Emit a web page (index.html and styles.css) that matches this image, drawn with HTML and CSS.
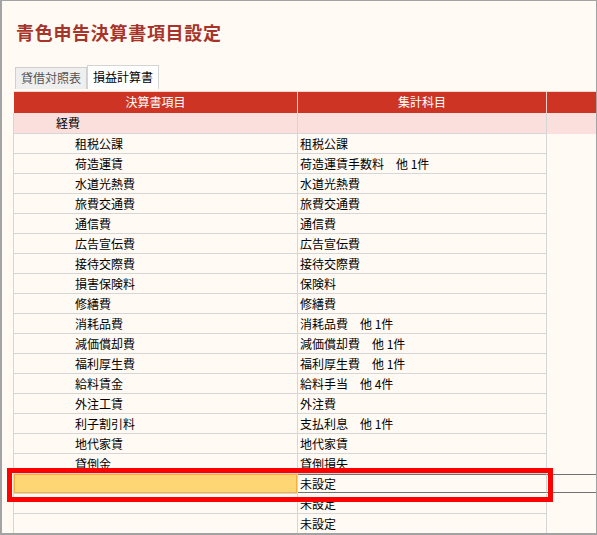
FILE: index.html
```html
<!DOCTYPE html>
<html lang="ja">
<head>
<meta charset="utf-8">
<title>青色申告決算書項目設定</title>
<link rel="stylesheet" href="styles.css">
</head>
<body>
<div class="frame">
  <h1 class="title">青色申告決算書項目設定</h1>
  <div class="tabs">
    <div class="tab">貸借対照表</div>
    <div class="tab active">損益計算書</div>
  </div>
  <div class="grid">
    <div class="row head"><div class="c1">決算書項目</div><div class="c2">集計科目</div><div class="c3"></div></div>
    <div class="row group"><div class="c1">経費</div><div class="c2"></div><div class="c3"></div></div>
    <div class="row"><div class="c1">租税公課</div><div class="c2">租税公課</div><div class="c3"></div></div>
    <div class="row"><div class="c1">荷造運賃</div><div class="c2">荷造運賃手数料　他 1件</div><div class="c3"></div></div>
    <div class="row"><div class="c1">水道光熱費</div><div class="c2">水道光熱費</div><div class="c3"></div></div>
    <div class="row"><div class="c1">旅費交通費</div><div class="c2">旅費交通費</div><div class="c3"></div></div>
    <div class="row"><div class="c1">通信費</div><div class="c2">通信費</div><div class="c3"></div></div>
    <div class="row"><div class="c1">広告宣伝費</div><div class="c2">広告宣伝費</div><div class="c3"></div></div>
    <div class="row"><div class="c1">接待交際費</div><div class="c2">接待交際費</div><div class="c3"></div></div>
    <div class="row"><div class="c1">損害保険料</div><div class="c2">保険料</div><div class="c3"></div></div>
    <div class="row"><div class="c1">修繕費</div><div class="c2">修繕費</div><div class="c3"></div></div>
    <div class="row"><div class="c1">消耗品費</div><div class="c2">消耗品費　他 1件</div><div class="c3"></div></div>
    <div class="row"><div class="c1">減価償却費</div><div class="c2">減価償却費　他 1件</div><div class="c3"></div></div>
    <div class="row"><div class="c1">福利厚生費</div><div class="c2">福利厚生費　他 1件</div><div class="c3"></div></div>
    <div class="row"><div class="c1">給料賃金</div><div class="c2">給料手当　他 4件</div><div class="c3"></div></div>
    <div class="row"><div class="c1">外注工賃</div><div class="c2">外注費</div><div class="c3"></div></div>
    <div class="row"><div class="c1">利子割引料</div><div class="c2">支払利息　他 1件</div><div class="c3"></div></div>
    <div class="row"><div class="c1">地代家賃</div><div class="c2">地代家賃</div><div class="c3"></div></div>
    <div class="row"><div class="c1">貸倒金</div><div class="c2">貸倒損失</div><div class="c3"></div></div>
    <div class="row sel"><div class="c1"></div><div class="c2">未設定</div><div class="c3"></div></div>
    <div class="row"><div class="c1"></div><div class="c2">未設定</div><div class="c3"></div></div>
    <div class="row"><div class="c1"></div><div class="c2">未設定</div><div class="c3"></div></div>
  </div>
  <div class="callout"></div>
</div>
</body>
</html>
```

FILE: styles.css
```css
html, body {
  margin: 0;
  padding: 0;
  background: #fffaf3;
}
.frame {
  position: relative;
  width: 597px;
  height: 535px;
  box-sizing: border-box;
  border-style: solid;
  border-color: #a3a3a3;
  border-width: 1px 1px 2px 2px;
  background: #fffaf3;
  overflow: hidden;
  font-family: "Noto Sans CJK JP", "Noto Sans", sans-serif;
  font-size: 12px;
  color: #000;
}
.title {
  margin: 0;
  padding: 19px 0 0 14px;
  height: 24px;
  line-height: 24px;
  font-size: 18px;
  font-weight: bold;
  letter-spacing: 0.7px;
  color: #a6342a;
}
.tabs {
  display: flex;
  align-items: flex-end;
  margin: 21px 0 0 13px;
  height: 24px;
}
.tab {
  box-sizing: border-box;
  height: 22px;
  line-height: 20px;
  padding: 0 5px;
  border: 1px solid #cfcfcf;
  border-bottom: none;
  background: #efefef;
  color: #555;
}
.tab.active {
  height: 24px;
  line-height: 22px;
  background: #fff;
  color: #000;
  border-color: #d4d4d4;
}
.grid {
  margin: 2px 0 0 11px;
}
.row {
  display: grid;
  grid-template-columns: 285px 249px 1fr;
  height: 20px;
}
.row > div {
  box-sizing: border-box;
  height: 20px;
  line-height: 19px;
  white-space: nowrap;
  overflow: hidden;
}
.row .c1 {
  border-left: 1px solid #d6d6d6;
  border-right: 1px solid #d6d6d6;
  border-bottom: 1px solid #d6d6d6;
  padding-left: 61px;
}
.row .c2 {
  border-right: 1px solid #d6d6d6;
  border-bottom: 1px solid #d6d6d6;
  padding-left: 2px;
}
.row.head {
  height: 22px;
}
.row.head > div {
  height: 22px;
  line-height: 20px;
  background: #cd3424;
  color: #fff;
  border-top: 1px solid #f6d6cf;
  border-bottom: none;
  text-align: center;
  padding-left: 0;
}
.row.head .c1 {
  border-left: 1px solid #fffaf3;
  border-right: 1px solid #f1d2cb;
}
.row.head .c2 {
  border-right: 1px solid #f1d2cb;
}
.row.group {
  height: 21px;
}
.row.group > div {
  height: 21px;
  line-height: 20px;
  background: #fadfdc;
}
.row.group .c1 {
  padding-left: 42px;
}
.row.sel .c1 {
  background: #ffd673;
  box-shadow: inset 0 0 0 1px #f5b040;
}
.row.sel .c2,
.row.sel .c3 {
  height: 19px;
  line-height: 17px;
  border-top: 1px solid #727272;
  border-bottom: 1px solid #727272;
  margin-top: 0;
}
.row.sel .c2 {
  border-bottom: 1px solid #727272;
}
.callout {
  position: absolute;
  left: 5px;
  top: 467px;
  width: 546px;
  height: 34px;
  box-sizing: border-box;
  border: 5px solid #ff0000;
}
```
